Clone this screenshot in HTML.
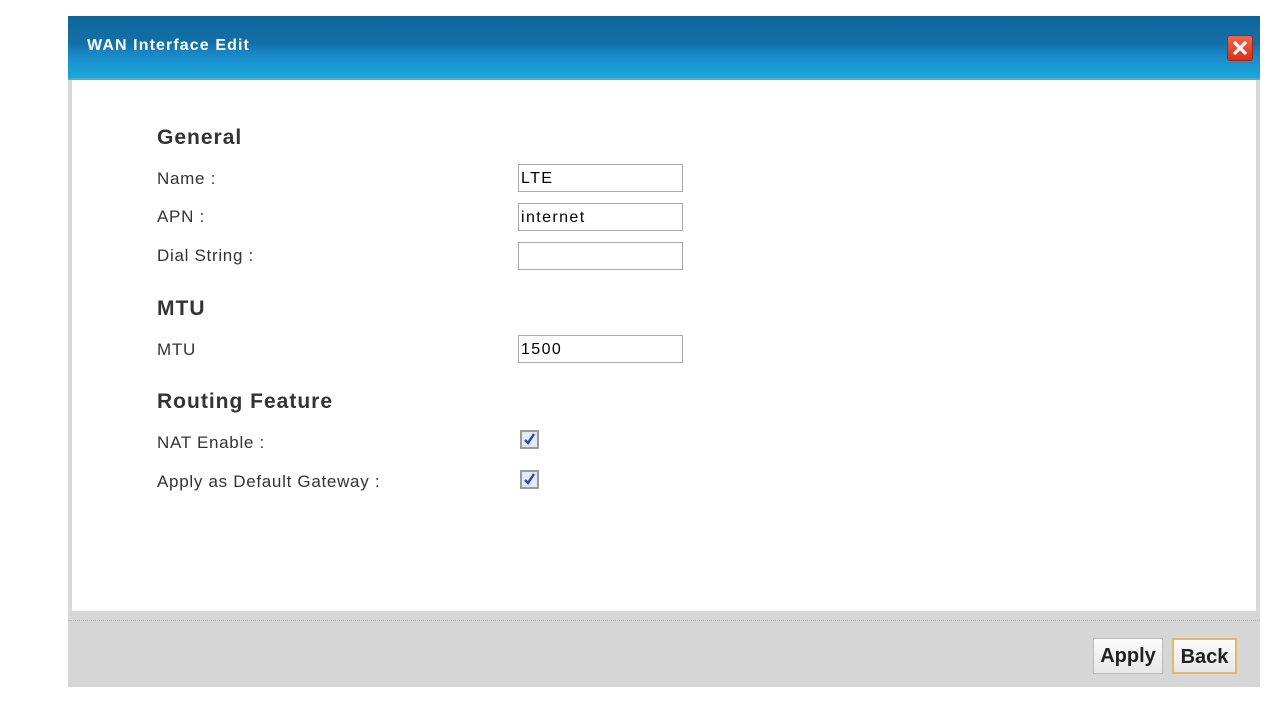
<!DOCTYPE html>
<html><head><style>
*{margin:0;padding:0;box-sizing:border-box}
body{width:1280px;height:705px;background:#fff;position:relative;font-family:"Liberation Sans",Arial,sans-serif;overflow:hidden}
.hdr{position:absolute;left:68px;top:16px;width:1192px;height:64px;background:linear-gradient(#0e6699 0%,#1370a8 45%,#1884c4 58%,#1a94d0 75%,#1aa8dc 100%);border-bottom:2px solid #5fa9be}
.hdr .t{position:absolute;left:19px;top:21px;color:#fff;font-weight:bold;font-size:16px;letter-spacing:1.1px}
.x{position:absolute;left:1159px;top:19px;width:26px;height:26px;background:linear-gradient(#f2674a,#d8321a);border:1px solid #9c2a24;border-radius:3px}
.body{position:absolute;left:68px;top:80px;width:1192px;height:531px;background:#fff;border-left:4px solid #d8d8d8;border-right:4px solid #d8d8d8}
.ftr{position:absolute;left:68px;top:611px;width:1192px;height:76px;background:#d6d6d6}
.ftr .dl{position:absolute;left:0;right:0;top:9px;border-top:1px dotted #b0b0b0}
.h{position:absolute;left:157px;font-weight:bold;font-size:21px;color:#333;letter-spacing:1px}
.l{position:absolute;left:157px;font-size:17px;color:#333;letter-spacing:0.7px}
.in{position:absolute;left:518px;width:165px;height:28px;border:1px solid #a9a9a9;font-size:16px;padding:5px 0 0 2px;color:#000;letter-spacing:1.4px}
.cb{position:absolute;left:520px;width:19px;height:19px;border:2px solid #9a9a9a;background:#e3e8f2}
.btn{position:absolute;top:638px;height:36px;background:linear-gradient(#fbfbfb,#e8e8e8);border:1px solid #bbb;font-weight:bold;font-size:20px;color:#222;text-align:center;line-height:34px}
</style></head><body>
<div class="hdr"><div class="t">WAN Interface Edit</div>
<div class="x"><svg width="24" height="24" viewBox="0 0 24 24"><path d="M6 6L18 18M18 6L6 18" stroke="#fff" stroke-width="3.2"/></svg></div></div>
<div class="body"></div>
<div class="h" style="top:126px">General</div>
<div class="l" style="top:169px">Name :</div><div class="in" style="top:164px">LTE</div>
<div class="l" style="top:207px">APN :</div><div class="in" style="top:203px">internet</div>
<div class="l" style="top:246px">Dial String :</div><div class="in" style="top:242px"></div>
<div class="h" style="top:297px">MTU</div>
<div class="l" style="top:340px">MTU</div><div class="in" style="top:335px">1500</div>
<div class="h" style="top:390px">Routing Feature</div>
<div class="l" style="top:433px">NAT Enable :</div>
<div class="cb" style="top:430px"><svg width="15" height="15" viewBox="0 0 15 15"><path d="M3 8L6 11L12 2" stroke="#2b4aa0" stroke-width="2.4" fill="none"/></svg></div>
<div class="l" style="top:472px">Apply as Default Gateway :</div>
<div class="cb" style="top:470px"><svg width="15" height="15" viewBox="0 0 15 15"><path d="M3 8L6 11L12 2" stroke="#2b4aa0" stroke-width="2.4" fill="none"/></svg></div>
<div class="ftr"><div class="dl"></div></div>
<div class="btn" style="left:1093px;width:70px">Apply</div>
<div class="btn" style="left:1172px;width:65px;border:2px solid #e0b870">Back</div>
</body></html>
